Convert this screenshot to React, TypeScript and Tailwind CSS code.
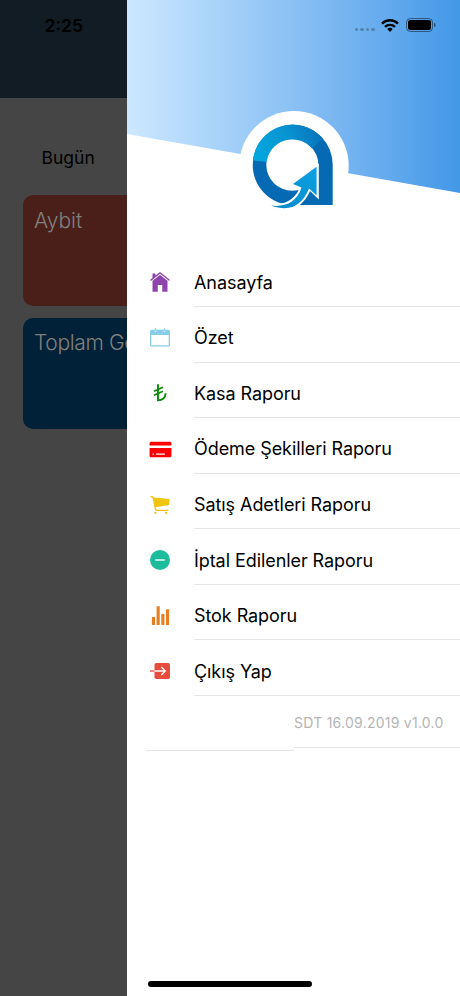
import { ReactNode } from 'react';
import { IoIosCard, IoIosCart, IoIosHome, IoIosStats } from 'react-icons/io';

const WifiIcon = () => (
  <svg width="18" height="13" viewBox="0 0 18 13" fill="none" stroke="#000" strokeWidth="2.4">
    <path d="M1 4.6a11.4 11.4 0 0 1 16 0" />
    <path d="M4 7.9a7.1 7.1 0 0 1 10 0" />
    <path d="M9 12.9 6.3 10.1a3.9 3.9 0 0 1 5.4 0z" fill="#000" stroke="none" />
  </svg>
);

const BatteryIcon = () => (
  <svg width="30" height="14" viewBox="0 0 30 14">
    <rect x="0.5" y="0.5" width="26" height="13" rx="3.8" fill="none" stroke="#000" strokeOpacity="0.45" />
    <rect x="2" y="2" width="23" height="10" rx="2.3" />
    <path d="M28 4.8v4.4c1-.4 1.5-1.2 1.5-2.2S29 5.200 28 4.800z" fillOpacity="0.5" />
  </svg>
);

const Logo = () => (
  <svg width="110" height="110" viewBox="0 0 110 110">
    <defs>
      <linearGradient id="ring" x1="0" y1="0.4" x2="1" y2="0.2">
        <stop offset="0" stopColor="#04a6de" />
        <stop offset="0.5" stopColor="#0893d2" />
        <stop offset="1" stopColor="#0871b9" />
      </linearGradient>
      <linearGradient id="arrow" x1="0" y1="1" x2="1" y2="0">
        <stop offset="0" stopColor="#0788cb" />
        <stop offset="1" stopColor="#0aa2e2" />
      </linearGradient>
    </defs>
    <circle cx="55" cy="54.800" r="54.700" fill="#fff" />
    <path
      d="M53.700 13.800A40 40 0 0 0 13.700 53.800C13.700 76 31.500 93.900 53.700 93.900H93.700V53.800A40 40 0 0 0 53.700 13.800zM53.300 27.800a26 26 0 1 1 0 52 26 26 0 0 1 0-52z"
      fill="#0569b3"
      fillRule="evenodd"
    />
    <path d="M13.900 49.500A40 40 0 0 1 84 27.500L73 37.500A26 26 0 0 0 27.500 51z" fill="url(#ring)" />
    <path
      d="M30 93.500C43 94.500 54 90 59.500 79.500L50.500 74 79.800 52.500V88.500L71 80C67.500 87.500 64.500 91 60 94.500V101H32z"
      fill="#fff"
    />
    <path
      d="M32 94.500C46 96.500 58 91 62.500 76.500L54 73 77.600 55.800V84.500L70 77.500C63 94.500 51 101.500 32 94.500z"
      fill="url(#arrow)"
    />
  </svg>
);

const CalendarIcon = () => (
  <svg width="20" height="19" viewBox="0 0 20 19" fill="#87cdea">
    <path
      d="M1.800 1.800h3V1a.8.8 0 0 1 1.600 0v.8h7.200V1a.8.8 0 0 1 1.600 0v.8h3c1 0 1.800.8 1.800 1.800v13.200c0 1-.8 1.800-1.800 1.800H1.800c-1 0-1.800-.8-1.800-1.800V3.600c0-1 .8-1.800 1.800-1.800zM1.300 7v9.500c0 .5.3.8.8.8h15.800c.5 0 .8-.3.800-.8V7z"
      fillRule="evenodd"
    />
    <path d="M4.700 3.200h1.800M13.500 3.200h1.800" stroke="#fff" strokeWidth="0.8" />
  </svg>
);

const LiraIcon = () => (
  <svg width="14" height="18" viewBox="0 0 14 18" fill="none" stroke="#0a8a0a">
    <path d="M5 .3v16c4.300 0 7.600-2.600 7.600-7" strokeWidth="1.900" />
    <path d="M1 7.300 10 3.300M1 11.300l9-4" strokeWidth="1.700" />
  </svg>
);

const RemoveIcon = () => (
  <svg width="20" height="20" viewBox="0 0 20 20">
    <circle cx="10" cy="10" r="10" fill="#1abc9c" />
    <path d="M5.200 10h9.600" stroke="#fff" strokeWidth="1.400" />
  </svg>
);

const LogOutIcon = () => (
  <svg width="20" height="16" viewBox="0 0 20 16" fill="none">
    <rect x="4.500" width="15.500" height="16" rx="1.800" fill="#e74c3c" />
    <path d="M0 8h4.500" stroke="#e74c3c" strokeWidth="1.300" />
    <path d="M4.500 8H15M11.300 4l4 4-4 4" stroke="#fff" strokeWidth="1.300" />
  </svg>
);

interface MenuItemProps {
  icon: ReactNode;
  label: string;
}
const MenuItem = ({ icon, label }: MenuItemProps) => (
  <a href="#" className="flex h-[55.57px] items-stretch pl-[19px]">
    <span className="flex w-7 items-center justify-center pt-[6.400px]">{icon}</span>
    <span className="ml-5 flex grow items-center border-b border-[#e6e6e8] pt-[7.200px] text-[18px] tracking-[-0.070px] whitespace-nowrap text-black">
      {label}
    </span>
  </a>
);

const items: MenuItemProps[] = [
  { icon: <IoIosHome size={24} color="#8e44ad" />, label: 'Anasayfa' },
  { icon: <CalendarIcon />, label: 'Özet' },
  { icon: <LiraIcon />, label: 'Kasa Raporu' },
  { icon: <IoIosCard size={25} color="#ff0000" />, label: 'Ödeme Şekilleri Raporu' },
  { icon: <IoIosCart size={24} color="#f1c40f" />, label: 'Satış Adetleri Raporu' },
  { icon: <RemoveIcon />, label: 'İptal Edilenler Raporu' },
  { icon: <IoIosStats size={25} color="#e67e22" />, label: 'Stok Raporu' },
  { icon: <LogOutIcon />, label: 'Çıkış Yap' },
];

const Dashboard = () => (
  <div className="w-[127px] shrink-0 overflow-hidden bg-[#454546]">
    <header className="h-[98px] bg-[#111c24] pt-[14px] pl-[44.500px] text-[17.500px] leading-6 font-semibold text-black">
      2:25
    </header>
    <p className="mt-[47px] ml-[41.500px] text-[17.500px] leading-[26px] text-black">Bugün</p>
    <div className="mt-[24px] ml-[23px] flex flex-col gap-3 text-[21px] leading-[26px] font-light whitespace-nowrap text-[#81807e]">
      <div className="h-[111px] w-[414px] rounded-[10px] bg-[#4a1f1a] pt-[13px] pl-[11px]">Aybit</div>
      <div className="h-[111px] w-[414px] rounded-[10px] bg-[#002138] pt-[12px] pl-[11px] tracking-[-0.350px]">
        Toplam Gelir
      </div>
    </div>
  </div>
);

const Drawer = () => (
  <div className="relative flex w-[333px] flex-col bg-white">
    <div className="h-[193px] bg-linear-to-r from-[#cce8ff] to-[#4298e7] [clip-path:polygon(0_0,100%_0,100%_100%,0_134px)]">
      <div className="flex items-center justify-end pt-[18px] pr-[24px]">
        <div className="mt-[9px] mr-[6px] flex gap-[2px]">
          {[0, 1, 2, 3].map((dot) => (
            <span key={dot} className="size-[3.600px] rounded-full bg-[#5484b2]" />
          ))}
        </div>
        <WifiIcon />
        <div className="ml-[7px]">
          <BatteryIcon />
        </div>
      </div>
    </div>
    <div className="absolute top-[111px] left-[112px]">
      <Logo />
    </div>

    <nav className="mt-[58.400px]">
      {items.map((item) => (
        <MenuItem key={item.label} {...item} />
      ))}
    </nav>

    <div className="flex items-start pl-[19px]">
      <div className="h-[55px] w-[148px] border-b border-[#e6e6e8]" />
      <div className="h-[52px] grow border-b border-[#e6e6e8] pt-[17px] text-[14px] leading-5 tracking-[0.250px] whitespace-nowrap text-[#b5b5b5]">
        SDT 16.09.2019 v1.0.0
      </div>
    </div>

    <div className="mt-auto mb-[9px] ml-[21px] h-[6px] w-[164px] rounded-full bg-black" />
  </div>
);

const App = () => (
  <div className="flex h-[996px] w-[460px] overflow-hidden font-['Inter',sans-serif]">
    <Dashboard />
    <Drawer />
  </div>
);
export default App;
